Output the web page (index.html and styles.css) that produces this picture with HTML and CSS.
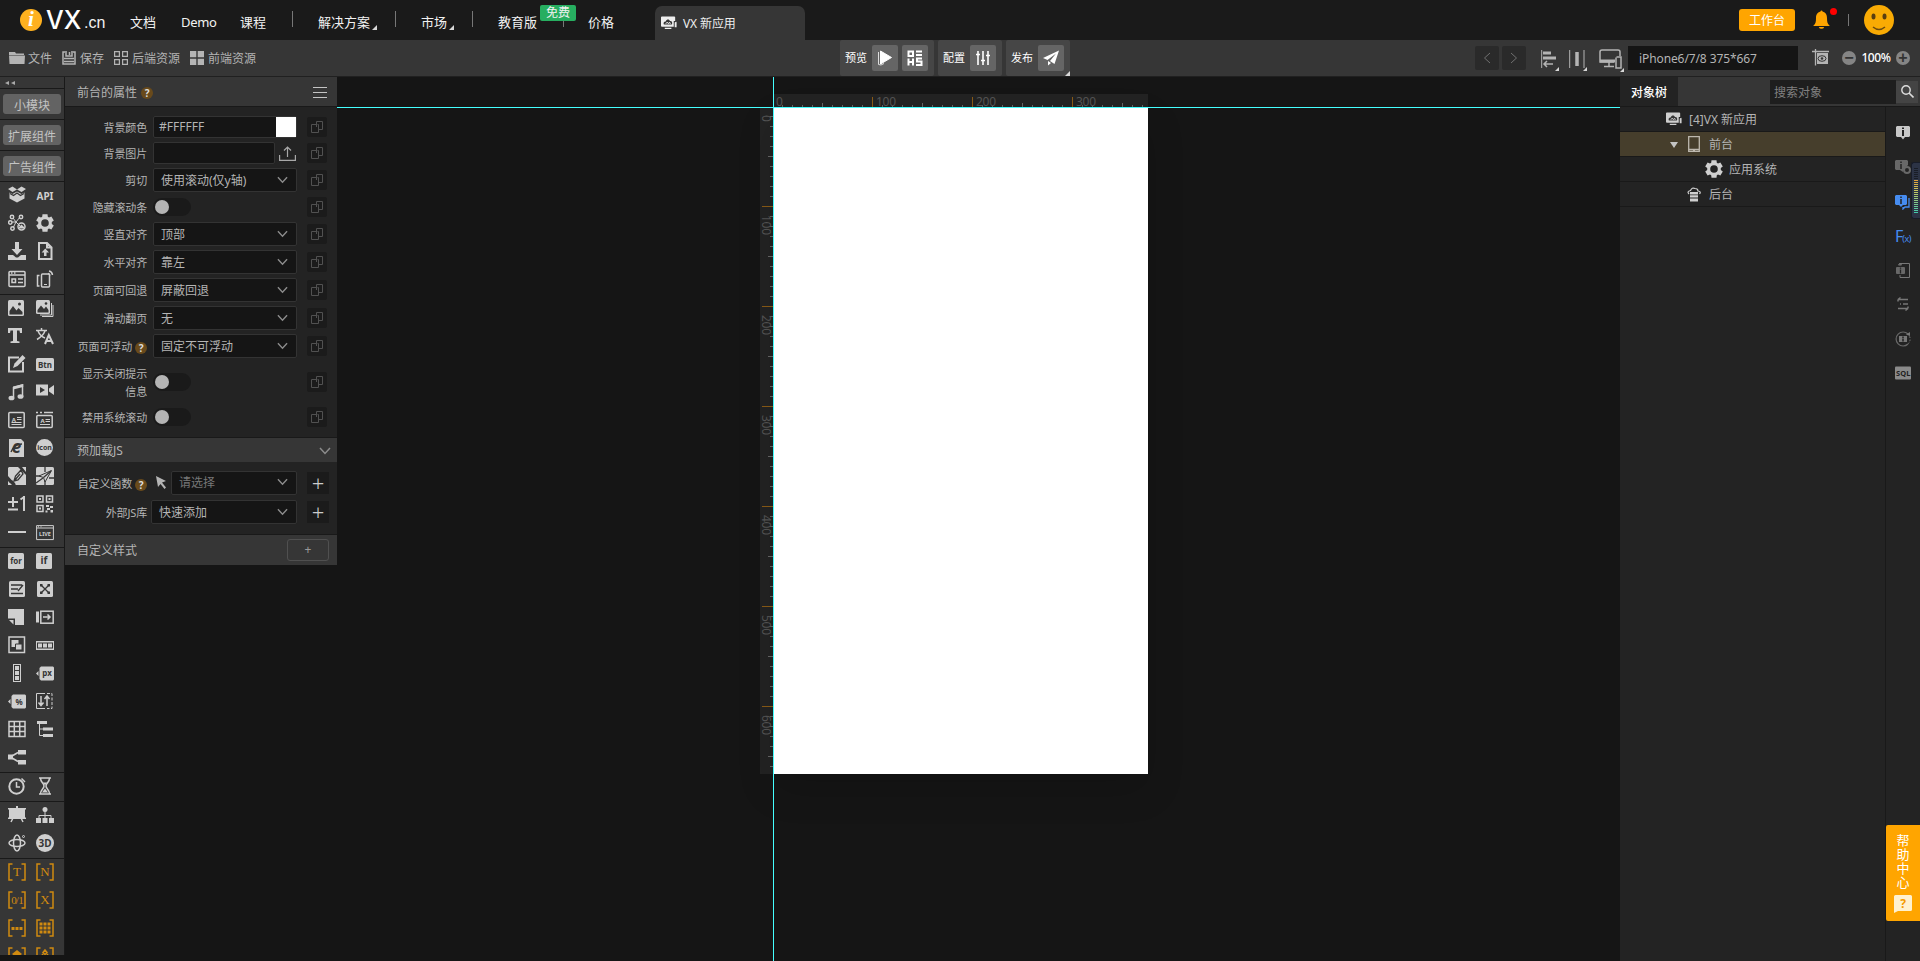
FILE: index.html
```html
<!DOCTYPE html>
<html lang="zh-CN">
<head>
<meta charset="UTF-8" />
<meta name="viewport" content="width=device-width, initial-scale=1.0" />
<title>VX 新应用</title>
<link rel="stylesheet" href="styles.css">
</head>
<body>

<!-- shared icons -->
<svg class="defs" width="0" height="0">
  <symbol id="copy" viewBox="0 0 20 20"><path d="M9.5 10V4.500H15.500V12.500H12M9.500 7.500H4.500V15.500H11.500V7.500H10.500" fill="none" stroke="#515151"/></symbol>
  <symbol id="down" viewBox="0 0 12 8"><path d="M1 1l5 5.500L11 1" fill="none" stroke="#8c8c8c" stroke-width="1.500"/></symbol>
  <symbol id="gear" viewBox="0 0 18 18"><path fill="currentColor" fill-rule="evenodd" d="M6.200 2.800L6.500.2h5l.3 2.600 1.200.7 2.400-1 2.400 4.100-2 1.400v2l2 1.400-2.400 4.100-2.400-1-1.200.7-.3 2.600h-5l-.3-2.600-1.200-.7-2.400 1L.2 11.400l2-1.400V8L.2 6.600l2.400-4.100 2.400 1zM9 5.200a3.800 3.800 0 1 0 0 7.600 3.800 3.800 0 0 0 0-7.600z"/></symbol>
  <symbol id="app" viewBox="0 0 18 14"><path fill="currentColor" d="M1 0h13a1 1 0 0 1 1 1v4h-1.500v6H1a1 1 0 0 1-1-1V1a1 1 0 0 1 1-1zM4 12h7v1.300H4zM14.500 6.500q2-1.500 2 0v5h-2z"/><path d="M3 8.500c-1-2 1-3.500 2-3 1-3 4-2.500 4.500-.5 2-.5 3 2 2 3.500z" fill="#363636"/><path d="M5 8l1.500-2L8 8l1-2 1 2" fill="none" stroke="currentColor" stroke-width=".9"/></symbol>
  <symbol id="bracket" viewBox="0 0 18 18"><path d="M4.500 1H1v16h3.500M13.500 1H17v16h-3.500" fill="none" stroke="#d08a10" stroke-width="1.500"/></symbol>
</svg>

<header class="topbar">
  <div class="logo"><span class="logo-i">i</span><span class="logo-vx">VX</span><span class="logo-cn">.cn</span></div>
  <nav class="nav">
    <a class="n1">文档</a>
    <a class="n2">Demo</a>
    <a class="n3">课程</a>
    <i class="sep"></i>
    <a class="n4">解决方案</a><b class="corner"></b>
    <i class="sep s2"></i>
    <a class="n5">市场</a><b class="corner"></b>
    <i class="sep s2"></i>
    <a class="n6">教育版<em class="free">免费</em></a>
    <i class="sep s3"></i>
    <a class="n7">价格</a>
  </nav>
  <div class="app-tab"><svg width="17" height="14"><use href="#app"/></svg><span>VX 新应用</span></div>
  <div class="account">
    <button class="workbench">工作台</button>
    <span class="bell"><svg width="17" height="20" viewBox="0 0 17 20"><path fill="#ffa500" d="M7.500 1.500a1 1 0 0 1 2 0C13 2.500 14 5 14 8c0 4 .5 6 2.500 7.500V16H.5v-.5C2.500 14 3 12 3 8c0-3 1-5.500 4.500-6.500zM5.800 17h5.400a2.800 2.500 0 0 1-5.400 0z"/></svg></span>
    <i class="sep s4"></i>
    <svg class="avatar" width="30" height="30" viewBox="0 0 30 30"><circle cx="15" cy="15" r="15" fill="#f9ab04"/><ellipse cx="9.500" cy="11.500" rx="2" ry="3" fill="#5a3e10"/><ellipse cx="20.500" cy="11.500" rx="2" ry="3" fill="#5a3e10"/><path d="M9 22q6 5 12 0" fill="none" stroke="#6b4a10" stroke-width="1.500"/></svg>
  </div>
</header>

<div class="toolbar">
  <div class="files">
    <span><svg width="16" height="14" viewBox="0 0 16 14"><path fill="#b4b4b4" d="M0 1h6l1 1.500h8V4H0zM0 4.500h16L15.500 13H.5z"/></svg>文件</span>
    <span><svg width="14" height="14" viewBox="0 0 14 14"><path fill="none" stroke="#b4b4b4" stroke-width="1.500" d="M3 1H1v12h12V1h-2M4 0v5h6V0M7.500 1v3M2 7.500h10M2 10.500h10"/></svg>保存</span>
    <span><svg width="14" height="14" viewBox="0 0 14 14"><path fill="none" stroke="#b4b4b4" stroke-width="1.200" d="M.6.600h4.800v4.800H.6zM8.600.600h4.800v4.800H8.600zM.6 8.600h4.800v4.800H.6zM8.600 8.600h4.800v4.800H8.600z"/></svg>后端资源</span>
    <span><svg width="14" height="14" viewBox="0 0 14 14"><path fill="#b4b4b4" d="M0 0h6.300v6.300H0zM7.700 0H14v6.300H7.700zM0 7.700h6.300V14H0zM7.700 7.700H14V14H7.700z"/></svg>前端资源</span>
  </div>
  <div class="runs">
    <div class="run">预览
      <button><svg width="16" height="16" viewBox="0 0 16 16"><path d="M3.500 1L14.500 7.500L3.500 14z" fill="#fff" stroke="#fff" stroke-linejoin="round"/><path d="M1.500 2v12.500L4 15l3-1.500" fill="none" stroke="#ddd"/></svg></button>
      <button><svg width="16" height="16" viewBox="0 0 16 16"><path fill="none" stroke="#fff" stroke-width="2" d="M1.500 1.500h4.500v4.500H1.500zM9 1.500h6M9 5h6M1.500 8.500v7M6 8.500v7M1.500 12h5M15 8.500H10v3h4.500v3.500H9"/></svg></button>
    </div>
    <div class="run">配置
      <button><svg width="16" height="16" viewBox="0 0 16 16"><path fill="none" stroke="#fff" stroke-width="1.600" d="M3 1v14M8 1v14M13 1v14M1 4.500h4M6 10.500h4M11 5.500h4"/></svg></button>
    </div>
    <div class="run">发布
      <button><svg width="16" height="16" viewBox="0 0 16 16"><path fill="#fff" d="M16 .5L0 8l4.500 2L13 3.500 7 11l4.500 3zM5 11v4.500L8 13z"/></svg></button>
      <b class="corner"></b>
    </div>
  </div>
  <div class="view">
    <button class="step"><svg width="8" height="12" viewBox="0 0 8 12"><path d="M7 1L1.500 6 7 11" fill="none" stroke="#707070"/></svg></button>
    <button class="step"><svg width="8" height="12" viewBox="0 0 8 12"><path d="M1 1l5.500 5L1 11" fill="none" stroke="#707070"/></svg></button>
    <span class="drop align"><svg width="16" height="18" viewBox="0 0 16 18"><path fill="none" stroke="#b4b4b4" d="M.7 0v18"/><path fill="none" stroke="#b4b4b4" stroke-width="3" d="M2 3h8M2 8h13"/><path fill="none" stroke="#b4b4b4" stroke-width="1.500" d="M3 14h9M6 11l-3 3 3 3"/></svg><b class="corner"></b></span>
    <span class="drop dist"><svg width="16" height="18" viewBox="0 0 16 18"><path fill="none" stroke="#b4b4b4" d="M.7 0v18M15 0v18"/><path stroke="#b4b4b4" stroke-width="3.500" d="M8 2v14"/></svg><b class="corner"></b></span>
    <span class="drop device"><svg width="23" height="20" viewBox="0 0 23 20"><path fill="none" stroke="#b4b4b4" stroke-width="1.500" d="M15 13H1V3a2 2 0 0 1 2-2h16a2 2 0 0 1 2 2v4M17.500 8h4.500v11h-5V8.500M10 13v4M5 17.500h10"/><path stroke="#b4b4b4" stroke-width="3" d="M1 12h15"/></svg><b class="corner"></b></span>
    <div class="size">iPhone6/7/8 375*667</div>
    <svg class="artboard" width="17" height="18" viewBox="0 0 17 18"><path fill="none" stroke="#b4b4b4" stroke-width="1.300" d="M0 2.500h17M3.500 0v16.500"/><path fill="#b4b4b4" d="M5 4h11v11H5z"/><ellipse cx="10" cy="9.500" rx="4" ry="2.800" fill="none" stroke="#363636"/><circle cx="10" cy="9.500" r="1.300" fill="#363636"/></svg>
    <i class="round">−</i><span class="zoom">100%</span><i class="round">+</i>
  </div>
</div>

<div class="main">
  <!-- component palette -->
  <aside class="tools">
    <div class="fold"><i></i><i></i></div>
    <div class="pack"><button>小模块</button></div>
    <div class="pack"><button>扩展组件</button></div>
    <div class="pack"><button>广告组件</button></div>
    <div class="group">
      <svg class="ic" viewBox="0 0 18 18"><path class="f" d="M9 3.500L13.500.5 18 3l-4.500 3zM9 3.500L4.500.5 0 3l4.500 3zM1.500 6.500L4.500 8 9 5.500 13.500 8l3-1.500v6L9 16.500 1.500 12.500z"/><path class="k" d="M2 7.500l3.500 2L9 7l3.500 2.500 3.500-2"/></svg>
      <svg class="ic" viewBox="0 0 18 18"><text x="9" y="13.500" class="api">API</text></svg>
      <svg class="ic" viewBox="0 0 18 18"><path class="l" d="M8 8L5 4M8 8l4-5M8 8H4M8 8l-3 6M8 8l5 5"/><g class="l2"><circle cx="4" cy="3" r="1.700"/><circle cx="13" cy="3" r="1.700"/><circle cx="2.300" cy="8.500" r="1.700"/><circle cx="4.500" cy="14.500" r="1.700"/><circle cx="13.500" cy="12.500" r="3.500"/></g><path class="f" d="M11 14.500h5v-1.500l-2.500-2.500L11 13z"/></svg>
      <svg class="ic"><use href="#gear"/></svg>
      <svg class="ic" viewBox="0 0 18 18"><path class="f" d="M7 0h4v7h3.500L9 13 3.500 7H7zM0 13h5l3 2.500h2L13 13h5v5H0z"/></svg>
      <svg class="ic" viewBox="0 0 18 18"><path class="l3" d="M3 1h8l4.500 4.500V17H3zM11 1v4.500h4.500"/><path class="f" d="M9.300 6.500l3.700 4h-2.500V14H8v-3.500H5.600z"/></svg>
      <svg class="ic" viewBox="0 0 18 18"><rect class="l2" x="1" y="1.500" width="16" height="15" rx="1"/><path class="l2" d="M1 5h16"/><path class="l2" d="M4 9h3.500v3.500H4zM10 9h5M10 12.500h5M3 3h1.500M6 3h1.500"/></svg>
      <svg class="ic" viewBox="0 0 18 18"><rect class="l2" x="5.500" y="4" width="8" height="13" rx="1"/><path class="l2" d="M3.500 5.500H1.500V16h2M12 3.500q1.500 0 2 2M13 1q3 .5 3.500 4"/><path class="l" d="M8 14.500h3"/></svg>
    </div>
    <div class="group">
      <svg class="ic" viewBox="0 0 18 18"><rect class="f" y="1" width="16" height="16" rx="1.500"/><path class="d" d="M1.500 15V12l3.500-5 3.500 4.500 2-2.500L14.500 13v2.500h-13z"/><circle class="d" cx="11.500" cy="5" r="1.500"/></svg>
      <svg class="ic" viewBox="0 0 18 18"><rect class="f" y="1" width="14" height="14" rx="1.500"/><path class="d" d="M1.500 13.500V11l3.500-4.500L8 10l2-2.500 2.500 3.500v2.500z"/><circle class="d" cx="10" cy="4.500" r="1.300"/><path class="l" d="M15.500 4v12H4M17 6v11.500H6"/></svg>
      <svg class="ic" viewBox="0 0 18 18"><path class="f" d="M0 1h14v5h-2l-.5-2.500H9V14l2.500.5V16h-9v-1.500L5 14V3.500H2.500L2 6H0z"/></svg>
      <svg class="ic" viewBox="0 0 18 18"><path class="l2" d="M0 3.500h11M5.500 1v2.500M9 4Q7 9 1 12.500M2 4q2 5 7 7"/><path class="l3" d="M9 17l3.800-9L17 17M10.500 14h5"/></svg>
      <svg class="ic" viewBox="0 0 18 18"><path class="l3" d="M11 2.500H1v14h14V7"/><path class="f" d="M14.500 0l3 3-8 8-4.500 2 1.500-4.500z"/></svg>
      <svg class="ic" viewBox="0 0 18 18"><rect class="f" y="3" width="18" height="13" rx="1.500"/><text x="9" y="12.500" class="t8">Btn</text></svg>
      <svg class="ic" viewBox="0 0 18 18"><path class="l2" d="M5.500 14V4.500L14.500 2v11.500"/><path class="f" d="M5 3.500L15.200 1v3L5 6.500z"/><ellipse class="f" cx="3.500" cy="15" rx="3" ry="2.300"/><ellipse class="f" cx="12.500" cy="13.500" rx="3" ry="2.300"/></svg>
      <svg class="ic" viewBox="0 0 18 18"><path class="f" d="M0 1.500h12v11H0zM13 5.500l5-3.500v10l-5-3.500z"/><path class="d" d="M4 4v6l5-3z"/></svg>
      <svg class="ic" viewBox="0 0 18 18"><rect class="l2" x=".8" y="1.500" width="15.400" height="15" rx="1"/><text x="5.800" y="10.500" class="t6">A</text><path class="l" d="M9 6.500h4.500M9 8.500h4.500M3.500 11.500h10M3.500 13.500h10"/></svg>
      <svg class="ic" viewBox="0 0 18 18"><rect class="l2" x=".8" y="4.500" width="15.400" height="12" rx="1"/><path class="l2" d="M0 1.500h2M4 1.500h2M8 1.500h9"/><path class="l" d="M9.500 8.500h4.500M9.500 10.500h4.500M4 13.500h10"/><text x="6.500" y="12" class="t6">A</text></svg>
      <svg class="ic" viewBox="0 0 18 18"><path class="f" d="M1 0h12l3 3v15H1z"/><text x="8.500" y="14" class="te">e</text><path class="k" d="M3 13Q6 5 14 5"/></svg>
      <svg class="ic" viewBox="0 0 18 18"><circle class="f" cx="8.500" cy="8.500" r="8.500"/><text x="8.500" y="11.300" class="t7">icon</text></svg>
      <svg class="ic" viewBox="0 0 18 18"><path class="f" d="M1 0h9l8 8v10H8L0 9V1zM14 0h4v5zM0 14v4h4z"/><path class="k" d="M6 14l1.500-5L13 3l2 4-5 6zM7 13l5-6M1 15l3-1 3 3"/></svg>
      <svg class="ic" viewBox="0 0 18 18"><rect class="f" width="18" height="18" rx="1.500"/><path class="k" d="M0 9h4M9 0v5M9 14v4M0 16l7-5M13 11h5"/><path class="fk" d="M15.500 3.500L3 9l4.500 1.500L9 15z"/><path class="k" d="M15 4L7.500 10.500"/></svg>
      <svg class="ic" viewBox="0 0 18 18"><path class="l3" d="M0 7h10M5 2v10M0 14.500h10M16 1v15M12.500 4.500L16 2"/></svg>
      <svg class="ic" viewBox="0 0 18 18"><path class="l2" d="M1 1h6v6H1zM10.500 1h6v6h-6zM1 10.500h6v6H1z"/><path class="f" d="M3 3h2v2H3zM12.500 3h2v2h-2zM3 12.500h2v2H3zM10 10h3v2h-3zM14 11h3v2h-3zM11 13h3v2h-3zM9.500 15.500h2v2h-2zM14.500 15h2.500v2.500h-2.500z"/></svg>
      <svg class="ic" viewBox="0 0 18 18"><path class="l3" d="M0 9h18"/></svg>
      <svg class="ic" viewBox="0 0 18 18"><path class="l" d="M.6 2.600h16.800v14H.6zM.6 5h16.800M2 3.800h1M4.500 3.800h1"/><text x="9" y="13" class="live">LIVE</text></svg>
    </div>
    <div class="group">
      <svg class="ic" viewBox="0 0 18 18"><rect class="f" y="1" width="16" height="16" rx="1.500"/><text x="8" y="11.500" class="t8">for</text></svg>
      <svg class="ic" viewBox="0 0 18 18"><rect class="f" y="1" width="16" height="16" rx="1.500"/><text x="8" y="12" class="t9">if</text></svg>
      <svg class="ic" viewBox="0 0 18 18"><rect class="f" x="1" y="1" width="16" height="16" rx="1.500"/><path class="k" d="M3 5h11M3 9h7M3 13.500h12M10 11l5-6"/></svg>
      <svg class="ic" viewBox="0 0 18 18"><rect class="f" x="1" y="1" width="16" height="16" rx="1.500"/><path class="k" d="M5 5l8 8M13 5l-8 8"/><path class="d" d="M4 4h2.500v2.500H4zM11.500 4H14v2.500h-2.500zM4 11.500h2.500V14H4zM11.500 11.500H14V14h-2.500z"/></svg>
      <svg class="ic" viewBox="0 0 18 18"><path class="f" d="M0 1h16v16H7v-6.500H0zM1 12h4.500v4.500z"/></svg>
      <svg class="ic" viewBox="0 0 18 18"><path class="f" d="M0 3.500h3v11H0z"/><rect class="l2" x="4.800" y="3.200" width="12.400" height="12"/><path class="l2" d="M7 9h7M11.500 6.500L14 9l-2.500 2.500"/></svg>
      <svg class="ic" viewBox="0 0 18 18"><rect class="l2" x="1" y="1" width="15.500" height="15.500"/><path class="f" d="M3.500 4h7v7h-7z"/><path class="fk" d="M7.500 8h6.500v6H7.500z"/></svg>
      <svg class="ic" viewBox="0 0 18 18"><path class="f" d="M0 5h18v9H0z"/><path class="d" d="M1 6.500h16v6H1z"/><path class="f" d="M2 7.500h4v4H2zM7 7.500h4v4H7zM12 7.500h4v4h-4z"/></svg>
      <svg class="ic" viewBox="0 0 18 18"><path class="f" d="M5 0h8v18H5z"/><path class="d" d="M6 1h6v16H6z"/><path class="f" d="M7 2h4v4H7zM7 7h4v4H7zM7 12h4v4H7z"/></svg>
      <svg class="ic" viewBox="0 0 18 18"><path class="f" d="M5 2.500h12l1 1v12l-1 1H5l-1.500-1.500v-11zM0 9.500L2.500 7v5z"/><text x="11" y="11.500" class="t8">px</text></svg>
      <svg class="ic" viewBox="0 0 18 18"><path class="f" d="M5 2.500h12l1 1v12l-1 1H5l-1.500-1.500v-11zM0 9.500L2.500 7v5z"/><text x="11" y="12.500" class="t8">%</text></svg>
      <svg class="ic" viewBox="0 0 18 18"><path class="l" stroke-dasharray="3 1.500" d="M11 1.500h5v15H11"/><path class="l" d="M9 1.500H.5v15H9"/><path class="l2" d="M5 4v9M2.500 10.500L5 13.500l2.500-3M11 14V4M8.500 7L11 4l2.500 3"/></svg>
      <svg class="ic" viewBox="0 0 18 18"><path class="l2" d="M1 1.500h16v15H1zM1 6.500h16M1 11.500h16M6.300 1.500v15M11.700 1.500v15"/></svg>
      <svg class="ic" viewBox="0 0 18 18"><path class="f" d="M1 1h10v3H1zM7 7.500h10v3H7zM7 14h10v3H7z"/><path class="l" d="M3.500 4v11.500H7M3.500 9H7"/></svg>
      <svg class="ic" viewBox="0 0 18 18"><path class="f" d="M0 6.500h5v5H0zM10 2h8v4.500h-8zM10 12h8v4.500h-8z"/><path class="l2" d="M4 8l6-3.500M4 10l6 3.500"/></svg>
    </div>
    <div class="group">
      <svg class="ic" viewBox="0 0 18 18"><circle class="l3" cx="8.500" cy="9.500" r="7.200"/><path class="l2" d="M8.500 5v5H12M13.500 1.500l3.500 3.500"/></svg>
      <svg class="ic" viewBox="0 0 18 18"><path class="l2" d="M3 1h12M3 17h12M4.500 1c0 5 3.500 5 3.500 8s-3.500 3-3.500 8M13.500 1c0 5-3.500 5-3.500 8s3.500 3 3.500 8"/><path class="f" d="M6.500 5.500h5L9 8zM6 15.500l3-4 3 4z"/></svg>
    </div>
    <div class="group">
      <svg class="ic" viewBox="0 0 18 18"><path class="f" d="M8 0h2v2H8zM1 2h16v10.500H1zM0 2h18v1.500H0zM0 11.500h18V13H0z"/><path class="l2" d="M5 12l-2 4M13 12l2 4"/></svg>
      <svg class="ic" viewBox="0 0 18 18"><circle class="f" cx="9" cy="3.500" r="2.500"/><path class="l" d="M9 5v8M3 13V9.500h12V13"/><path class="f" d="M0 12h5v5H0zM6.500 12h5v5h-5zM13 12h5v5h-5z"/></svg>
      <svg class="ic" viewBox="0 0 18 18"><ellipse class="l2" cx="9" cy="9" rx="3.500" ry="8"/><ellipse class="l2" cx="9" cy="9" rx="8" ry="3.500"/><circle class="l" cx="15.500" cy="2.500" r="1"/></svg>
      <svg class="ic" viewBox="0 0 18 18"><circle class="f" cx="9" cy="9" r="9"/><text x="9" y="12.700" class="t3d">3D</text></svg>
    </div>
    <div class="group vars">
      <svg class="ic" viewBox="0 0 18 18"><use href="#bracket"/><text x="9" y="13">T</text></svg>
      <svg class="ic" viewBox="0 0 18 18"><use href="#bracket"/><text x="9" y="13">N</text></svg>
      <svg class="ic" viewBox="0 0 18 18"><use href="#bracket"/><text x="9" y="13" class="bool">0/1</text></svg>
      <svg class="ic" viewBox="0 0 18 18"><use href="#bracket"/><text x="9" y="13">X</text></svg>
      <svg class="ic" viewBox="0 0 18 18"><use href="#bracket"/><path fill="#d08a10" d="M3.500 8h3v3h-3zM7.500 8h3v3h-3zM11.500 8h3v3h-3z"/></svg>
      <svg class="ic" viewBox="0 0 18 18"><use href="#bracket"/><path fill="#d08a10" d="M3.500 3.500h3v3h-3zM7.500 3.500h3v3h-3zM11.500 3.500h3v3h-3zM3.500 7.500h3v3h-3zM7.500 7.500h3v3h-3zM11.500 7.500h3v3h-3zM3.500 11.500h3v3h-3zM7.500 11.500h3v3h-3zM11.500 11.500h3v3h-3z"/></svg>
      <svg class="ic" viewBox="0 0 18 18"><use href="#bracket"/><path fill="#d08a10" d="M9 3l5 4-5 4-5-4z"/></svg>
      <svg class="ic" viewBox="0 0 18 18"><use href="#bracket"/><path fill="none" stroke="#d08a10" stroke-width="1.500" d="M9 3l2 2.500-2 2-2-2zM6 7l2 2.500M12 7l-2 2.500"/></svg>
    </div>
  </aside>

  <!-- property panel -->
  <section class="props">
    <div class="head"><span>前台的属性</span><i class="help">?</i><svg class="menu" width="14" height="11" viewBox="0 0 14 11"><path stroke="#c4c4c4" d="M0 .5h14M0 5.500h14M0 10.500h14"/></svg></div>
    <div class="rows">
      <div class="row short"><label>背景颜色</label><div class="input">#FFFFFF<i class="swatch"></i></div><svg class="copy"><use href="#copy"/></svg></div>
      <div class="row short"><label>背景图片</label><div class="input image"></div><svg class="upload" width="17" height="15" viewBox="0 0 17 15"><path fill="none" stroke="#a8a8a8" stroke-width="1.200" d="M.6 9v5.400h15.800V9M8.500 11V1M5 4.500L8.500 1 12 4.500"/></svg><svg class="copy"><use href="#copy"/></svg></div>
      <div class="row"><label>剪切</label><div class="select">使用滚动(仅y轴)<svg><use href="#down"/></svg></div><svg class="copy"><use href="#copy"/></svg></div>
      <div class="row short"><label>隐藏滚动条</label><div class="field"><i class="switch"></i></div><svg class="copy"><use href="#copy"/></svg></div>
      <div class="row"><label>竖直对齐</label><div class="select">顶部<svg><use href="#down"/></svg></div><svg class="copy"><use href="#copy"/></svg></div>
      <div class="row"><label>水平对齐</label><div class="select">靠左<svg><use href="#down"/></svg></div><svg class="copy"><use href="#copy"/></svg></div>
      <div class="row"><label>页面可回退</label><div class="select">屏蔽回退<svg><use href="#down"/></svg></div><svg class="copy"><use href="#copy"/></svg></div>
      <div class="row"><label>滑动翻页</label><div class="select">无<svg><use href="#down"/></svg></div><svg class="copy"><use href="#copy"/></svg></div>
      <div class="row"><label>页面可浮动<i class="help">?</i></label><div class="select">固定不可浮动<svg><use href="#down"/></svg></div><svg class="copy"><use href="#copy"/></svg></div>
      <div class="row tall"><label>显示关闭提示<br>信息</label><div class="field"><i class="switch"></i></div><svg class="copy"><use href="#copy"/></svg></div>
      <div class="row short"><label>禁用系统滚动</label><div class="field"><i class="switch"></i></div><svg class="copy"><use href="#copy"/></svg></div>
    </div>
    <div class="head sub">预加载JS<svg class="menu" width="12" height="8"><use href="#down"/></svg></div>
    <div class="rows js">
      <div class="row"><label>自定义函数<i class="help">?</i></label><svg class="pointer" width="12" height="13" viewBox="0 0 12 13"><path fill="#b4b4b4" d="M1 0l10 5-4 1.500 4 5-1.500 1.500-4-5-2.500 3z"/></svg><div class="select hint">请选择<svg><use href="#down"/></svg></div><button class="add">+</button></div>
      <div class="row"><label>外部JS库</label><div class="select lib">快速添加<svg><use href="#down"/></svg></div><button class="add">+</button></div>
    </div>
    <div class="head style">自定义样式<button class="add-style">+</button></div>
  </section>

  <!-- canvas -->
  <section class="stage">
    <div class="ruler-x"><span>0</span><span>100</span><span>200</span><span>300</span></div>
    <div class="ruler-y"><span>0</span><span>100</span><span>200</span><span>300</span><span>400</span><span>500</span><span>600</span></div>
    <div class="page"></div>
    <i class="guide-x"></i>
    <i class="guide-y"></i>
  </section>

  <!-- object tree -->
  <aside class="objects">
    <div class="tabs">
      <span class="tab">对象树</span>
      <div class="search">搜索对象</div>
      <button class="find"><svg width="13" height="13" viewBox="0 0 13 13"><circle cx="5" cy="5" r="4.200" fill="none" stroke="#ddd" stroke-width="1.400"/><path d="M8 8l4.500 4.500" stroke="#ddd" stroke-width="1.600"/></svg></button>
    </div>
    <div class="columns">
      <div class="tree">
        <div class="node root"><svg width="17" height="14"><use href="#app"/></svg>[4]VX 新应用</div>
        <div class="node front"><b class="arrow"></b><svg width="12" height="16" viewBox="0 0 12 16"><path fill="none" stroke="#bdb8ae" stroke-width="1.300" d="M.7.700h10.600v14.600H.7zM.7 13.500h10.600M5 14.500h2"/></svg>前台</div>
        <div class="node system"><svg width="18" height="18"><use href="#gear"/></svg>应用系统</div>
        <div class="node back"><svg width="14" height="15" viewBox="0 0 14 15"><path fill="none" stroke="#cfcfcf" stroke-width="1.200" d="M2 7Q-.5 4.500 3.500 3.500 5 0 8 1.500q3 0 3 2.500 3.500.5 1.500 3"/><path fill="#cfcfcf" d="M3 5h8v2.400H3zM3 8.200h8v2.400H3zM3 11.600h8V14.500H3z"/></svg>后台</div>
      </div>
      <div class="rail">
        <svg viewBox="0 0 16 16"><path fill="#c8c8c8" d="M2 1h12l1 1v9l-1 1h-4l-2 2.500L6 12H2l-1-1V2z"/><path stroke="#222" stroke-width="2" d="M8 2.500v1.600M8 5v6"/></svg>
        <svg viewBox="0 0 16 16"><path fill="#686868" d="M1 1h11l1 1v4l-4 4-1 3-3-2H1l-1-1V2z"/><path stroke="#222" stroke-width="1.500" d="M6 2.500v1.500M6 5v5"/><circle cx="12" cy="11" r="3" fill="none" stroke="#686868" stroke-width="2"/></svg>
        <svg viewBox="0 0 16 16"><path fill="#468cf0" d="M1 1h10l1 1v8l-1 1H8l-2 2-2-2H1l-1-1V2z"/><path stroke="#222" stroke-width="1.500" d="M6 2.500v1.500M6 5v5"/><path fill="none" stroke="#468cf0" stroke-width="1.300" d="M14 4v9h-4l-2 2v-2"/></svg>
        <div class="fx">F<small>(x)</small></div>
        <svg viewBox="0 0 16 16"><rect x="1" y="5" width="9" height="7" rx="1" fill="#686868"/><path stroke="#222" stroke-width="1.300" d="M5.500 5.500v1.300M5.500 7.500v4"/><path fill="none" stroke="#777" d="M5 3V1.500h9.500v14H5V13M5 1l-1.500 2h3z"/></svg>
        <svg viewBox="0 0 16 16"><path fill="none" stroke="#777" stroke-width="1.500" d="M3 3.500h10M3 3.500l2.500-2M3 3.500v2M13 12.500H3M13 12.500l-2.500 2M13 12.500v-2M5 8h1M8 8h5"/></svg>
        <svg viewBox="0 0 16 16"><path fill="none" stroke="#686868" stroke-width="1.200" d="M13 3A7 7 0 1 0 13 13"/><path fill="none" stroke="#777" stroke-dasharray="1.500 1.500" d="M13 3a7 7 0 0 1 0 10"/><path fill="#777" d="M11 3.500L15 1v4zM4 5h8v6H4z"/><path stroke="#222" stroke-width="1.500" d="M8 5.500V7M8 7.500v3"/></svg>
        <svg viewBox="0 0 16 16"><rect y="1.500" width="16" height="13" rx="1" fill="#8a8a8a"/><text x="8.200" y="10.700" class="sql">SQL</text></svg>
      </div>
    </div>
  </aside>
</div>

<div class="meter"><i></i></div>
<div class="help-center"><span>帮</span><span>助</span><span>中</span><span>心</span><svg width="18" height="18" viewBox="0 0 18 18"><path fill="#fff1cf" d="M1.500 0h15A1.500 1.500 0 0 1 18 1.500V14.500a1.500 1.500 0 0 1-1.500 1.500H4L0 18V1.500A1.500 1.500 0 0 1 1.500 0z"/><text x="9" y="12.500">?</text></svg></div>

</body>
</html>
```

FILE: styles.css
```css
:root{
  --bar:    #363636;
  --panel:  #232323;
  --dark:   #151515;
  --line:   #191919;
  --txt:    #b4b4b4;
  --icon:   #cfcfcf;
  --orange: #ffa500;
  font-family:"Noto Sans","Noto Sans CJK SC",sans-serif;
}

*{box-sizing:border-box;margin:0;padding:0}
i,em{font-style:normal}
button{border:none;font:inherit;color:inherit}
svg{display:block;flex:none}
.defs{position:absolute}

body{
  height:100vh;
  background:var(--dark);
  color:var(--txt);
  font-size:12px;
  line-height:18px;
  overflow:hidden;
  display:flex;
  flex-direction:column;
  white-space:nowrap;
}

/* top bar */
.topbar{height:40px;flex:none;background:#1a1a1a;display:flex;align-items:center;color:#f2f2f2}
.logo{width:130px;padding-left:20px;display:flex;align-items:center}
.logo-i{
  width:22px;height:22px;border-radius:50%;
  background:#ffb11f;color:#fff;
  font:italic bold 21px/20px "Liberation Serif",serif;text-align:center;
}
.logo-vx{width:38px;margin-left:4px;font:500 25px/24px Inter,sans-serif;color:#fff}
.logo-cn{font:16px/20px "Liberation Sans",sans-serif;padding-top:5px}
.nav{display:flex;align-items:center;font-size:13px;height:40px;padding-top:3px;width:525px}
.n1{width:51px}
.n2{width:59px;letter-spacing:-.3px}
.n3{width:52px}
.n4{margin-left:25px}
.n5,.n6{margin-left:25px}
.n6{position:relative;width:65px}
.n7{margin-left:24px}
.sep{width:1px;height:16px;background:#777;margin-top:-5px}
.corner{width:0;height:0;border-left:5px solid transparent;border-bottom:5px solid #d8d8d8;margin:12px 0 0 2px}
.s2{margin-left:18px}
.s4{height:12px;margin:0 15px 0 18px}
.free{
  position:absolute;left:42px;top:-8px;
  width:36px;height:16px;border-radius:2px;
  background:#27ae60;line-height:16px;font-size:12px;text-align:center;
}
.app-tab{
  width:150px;height:34px;align-self:flex-end;
  background:var(--bar);border-radius:7px 7px 0 0;
  display:flex;align-items:center;padding-left:6px;gap:5px;color:#eee;
}
.app-tab span{padding-top:2px;letter-spacing:-.1px}
.account{margin-left:auto;display:flex;align-items:center;padding-right:26px}
.workbench{width:56px;height:22px;border-radius:3px;background:var(--orange);color:#fff;line-height:23px}
.bell{position:relative;margin-left:18px}
.bell::after{
  content:"";position:absolute;right:-7px;top:-2px;
  width:7px;height:7px;border-radius:50%;background:red;
}

/* toolbar */
.toolbar{height:37px;flex:none;background:var(--bar);border-bottom:1px solid #202020;display:flex;align-items:center}
.files{width:840px;padding:1px 0 0 9px;display:flex;gap:10px}
.files span{display:flex;align-items:center;gap:4px}
.files span:first-child{gap:3px}
.files svg{margin-top:-2px}
.runs{display:flex;gap:4px}
.run{
  position:relative;height:36px;padding:0 6px 0 5px;border-radius:2px;
  background:#464646;color:#fff;font-size:11px;
  display:flex;align-items:center;gap:4px;
}
.run button{width:26px;height:26px;border-radius:2px;background:#656565;display:flex;align-items:center;justify-content:center}
.run button:first-of-type{margin-left:1px}
.run .corner{position:absolute;right:0;bottom:0;margin:0}
.view{margin-left:auto;display:flex;align-items:center;padding-right:10px}
.step{width:24px;height:24px;border-radius:2px;background:#2a2a2a;margin-right:3px;display:flex;align-items:center;justify-content:center}
.drop{position:relative;padding-top:2px}
.drop .corner{position:absolute;right:-2px;bottom:-3px;border-width:4px;border-right:0;border-top:0}
.align{margin-left:12px}
.dist{margin:0 14px 0 12px}
.size{width:170px;height:24px;margin:0 14px 0 6px;padding-left:11px;background:var(--dark);line-height:26px;letter-spacing:-.1px}
.artboard{margin-right:13px}
.round{width:14px;height:14px;border-radius:50%;background:#858585;color:#333;font:bold 16px/14px "Liberation Sans",sans-serif;text-align:center}
.zoom{width:40px;text-align:center;color:#fff;font-weight:500;letter-spacing:-.4px}

.main{flex:1;display:flex;min-height:0}

/* component palette */
.tools{width:65px;height:878px;background:var(--bar);border-right:1px solid var(--line);overflow:hidden;color:var(--icon)}
.fold{height:12px;border-bottom:1px solid var(--line);display:flex;align-items:center;padding-left:5px;gap:2px}
.fold i{border:2px solid transparent;border-right:4px solid #aaa;border-left:0}
.pack{height:31px;padding:5px 3px;border-bottom:1px solid var(--line)}
.pack button{width:58px;height:20px;border-radius:3px;background:#636363;line-height:21px;padding-top:1px;color:#c4c4c4}
.group{
  display:grid;grid-template-columns:18px 18px;grid-auto-rows:28px;
  column-gap:10px;padding-left:8px;align-items:center;
  border-bottom:1px solid var(--line);
}
.ic{width:18px;height:18px;margin-top:-2px}
.f{fill:var(--icon)}
.d{fill:var(--bar)}
.l,.l2,.l3{fill:none;stroke:var(--icon);stroke-width:1}
.l2{stroke-width:1.5}
.l3{stroke-width:2}
.k{fill:none;stroke:var(--bar);stroke-width:1.3}
.fk{fill:var(--icon);stroke:var(--bar)}
.ic text{fill:var(--bar);text-anchor:middle;font-weight:700}
.ic .api{fill:var(--icon);font-size:10px}
.t8{font-size:8px}
.t9{font-size:10px}
.t7{font-size:7px}
.t3d{font-size:10px}
.te{font-size:17px;font-style:italic}
.ic .t6{font-size:6px;fill:var(--icon)}
.ic .live{font-size:5.5px;fill:var(--icon)}
.ic.ic text{font-weight:700}
.vars .ic text{fill:#d08a10;font:13px "Liberation Serif",serif}
.vars .ic .bool{font-size:11px;letter-spacing:-.8px}

/* properties */
.props{width:272px}
.head{height:30px;background:var(--bar);border-bottom:1px solid var(--line);display:flex;align-items:center;padding:2px 10px 0 12px}
.menu{margin-left:auto}
.head > svg{margin-top:-1px}
.help{
  display:inline-block;width:12px;height:12px;border-radius:50%;
  background:#694a1b;color:#ddd;font:bold 10px/12px "Noto Sans",sans-serif;text-align:center;
}
.head .help{margin-left:4px}
.rows{background:var(--panel);padding:7px 10px 7px 0;border-bottom:1px solid var(--line)}
.row{height:28px;display:flex;align-items:center}
.row.short{height:26px}
.row.tall{height:44px}
.row label{width:82px;margin-right:6px;padding-top:2px;text-align:right;font-size:11px;line-height:18px;letter-spacing:-.15px}
.row label .help{margin-left:3px;vertical-align:-1px}
.input,.select{
  width:144px;height:24px;padding:1px 0 0 7px;
  background:var(--dark);border:1px solid #333;border-radius:2px;
  display:flex;align-items:center;justify-content:space-between;
}
.input{height:22px;padding:0 0 0 5px}
.input.image{width:122px}
.swatch{width:20px;height:20px;background:#fff}
.upload{margin-left:4px}
.select svg{width:11px;height:8px;margin:-2px 8px 0 0}
.field{width:144px}
.switch{display:block;width:38px;height:18px;border-radius:9px;background:#1a1a1a;padding:2px 1px}
.switch::before{content:"";display:block;width:14px;height:14px;margin-left:1px;border-radius:50%;background:#b4b4b4}
.copy{width:20px;height:20px;margin-left:auto;background:#1b1b1b;border-radius:2px}
.head.sub{height:24px;border:none}
.head.sub .menu{margin-right:-4px}
.rows.js{padding:6px 8px 7px 0}
.js .row{height:29px}
.js .row + .row{height:30px}
.pointer{margin:0 4px 0 2px}
.select.hint{width:126px;color:#777}
.select.lib{width:146px;margin-left:-2px}
.add{width:22px;height:22px;margin-left:auto;background:#1b1b1b;color:#ccc;font:22px/18px "Noto Sans",sans-serif;font-weight:300}
.head.style{border:none;padding-right:8px}
.add-style{width:42px;height:22px;margin:-2px 0 0 auto;background:none;border:1px solid #505050;border-radius:3px;color:#999;line-height:18px}

/* canvas */
.stage{
  position:relative;flex:1;overflow:hidden;
  display:grid;grid-template-columns:14px 374px;grid-template-rows:14px 666px;
  padding:17px 0 0 423px;
}
.ruler-x,.ruler-y{background-color:#232323;color:#555;display:flex;font-size:12px;letter-spacing:-.3px}
.ruler-x{
  grid-column:2;height:13px;line-height:15px;
  background-image:linear-gradient(90deg,#8a5b16 1px,transparent 1px),linear-gradient(90deg,#666 1px,transparent 1px),linear-gradient(90deg,#666 1px,transparent 1px);
  background-size:100px 10px,50px 4px,10px 2px;
  background-position:98px 100%,48px 100%,8px 100%;
  background-repeat:repeat-x;
}
.ruler-x span{width:100px;padding-left:2px}
.ruler-x span:last-child{width:74px}
.ruler-y{
  grid-column:1;width:13px;flex-direction:column;padding-top:7px;
  background-image:linear-gradient(#8a5b16 1px,transparent 1px),linear-gradient(#666 1px,transparent 1px),linear-gradient(#666 1px,transparent 1px);
  background-size:11px 100px,5px 50px,3px 10px;
  background-position:100% 98px,100% 48px,100% 8px;
  background-repeat:repeat-y;
}
.ruler-y span{flex:none;height:100px;writing-mode:vertical-rl;line-height:13px}
.ruler-y span:last-child{height:59px}
.page{background:#fff;box-shadow:0 15px 35px rgba(0,0,0,.15)}
.guide-x{position:absolute;left:0;right:0;top:30px;height:1px;background:#4ff}
.guide-y{position:absolute;top:0;bottom:0;left:436px;width:1px;background:#4ff}

/* object tree */
.objects{width:300px;background:var(--panel);display:flex;flex-direction:column}
.tabs{height:30px;background:var(--bar);border-bottom:1px solid var(--line);display:flex;align-items:center}
.tab{width:58px;height:29px;background:var(--panel);color:#fff;font-weight:500;line-height:31px;text-align:center}
.search{width:126px;height:24px;margin-left:92px;padding-left:4px;background:#1e1e1e;color:#808080;line-height:26px}
.find{width:22px;height:22px;background:#444;display:flex;align-items:center;justify-content:center}
.columns{flex:1;display:flex}
.tree{width:266px;border-right:1px solid var(--line)}
.node{height:25px;border-bottom:1px solid var(--line);display:flex;align-items:center;gap:7px;padding-top:2px}
.node svg{color:var(--icon);margin-top:-2px}
.root{padding-left:46px}
.root svg{margin-right:-1px}
.front{padding-left:50px;background:#463e2c;gap:9px}
.arrow{border:4px solid transparent;border-top:6px solid #c4c4c4;border-bottom:0}
.front .arrow{margin-right:1px}
.system{padding-left:85px;gap:6px}
.back{padding-left:67px;gap:8px}
.rail{flex:1;padding-top:9px;display:flex;flex-direction:column;align-items:center}
.rail svg{width:16px;height:16px;margin:9px 0 9.3px}
.fx{height:34.3px;line-height:34px;color:#468cf0;font-size:16px;letter-spacing:-1px}
.fx small{font-size:9px;letter-spacing:-.5px}
.sql{font-size:7.5px;font-weight:700;text-anchor:middle;fill:#222}

/* floating bits */
.meter{position:absolute;right:0;top:162px;width:9px;height:57px;background:#2c3345;border:1px solid #181c28;border-right:0;border-radius:3px 0 0 3px;padding:5px 2px}
.meter i{
  display:block;width:4px;height:46px;
  background:repeating-linear-gradient(transparent 0 1px,#2c3345 1px 2px),linear-gradient(#191d26 26%,#e2a33b 27%,#c8c860 50%,#3ccbb0);
}
.help-center{
  position:absolute;right:0;top:825px;width:34px;height:96px;
  background:var(--orange);color:#fff;border-radius:2px 0 0 2px;
  font-size:13px;line-height:14px;padding-top:8px;
  display:flex;flex-direction:column;align-items:center;
}
.help-center svg{margin-top:6px}
.help-center text{fill:#f59a00;font-size:12px;font-weight:700;text-anchor:middle}
```
